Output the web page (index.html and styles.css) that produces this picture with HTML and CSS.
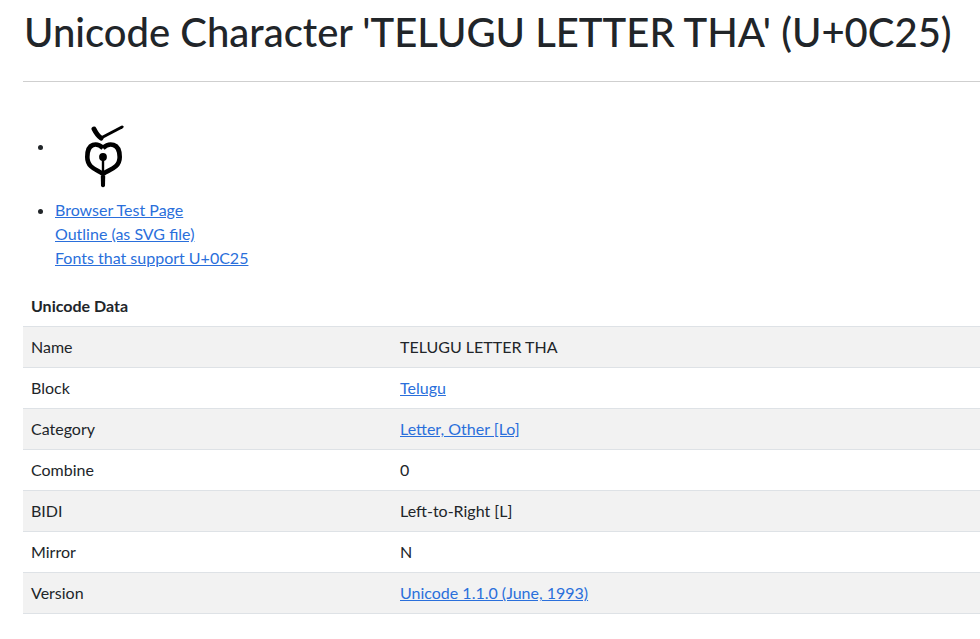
FILE: index.html
```html
<!DOCTYPE html>
<html lang="en">
<head>
<meta charset="utf-8">
<title>Unicode Character 'TELUGU LETTER THA' (U+0C25)</title>
<link rel="stylesheet" href="styles.css">
</head>
<body>
<main class="page">
  <h1 class="title">Unicode Character 'TELUGU LETTER THA' (U+0C25)</h1>
  <hr class="rule">
  <ul class="links">
    <li class="glyph-item">
      <svg class="glyph" width="100" height="100" viewBox="0 0 100 100" aria-label="థ">
        <path d="M48 50 C42 44.5 32.3 44.5 32.3 59 C32.3 71 44 72 48 76 C52 72 64.7 71 64.7 59 C64.7 44.5 54 44.5 48 50" fill="none" stroke="#000" stroke-width="4.6"/>
        <path d="M46 40 L67 29" stroke="#000" stroke-width="3" stroke-linecap="round"/>
        <path d="M39 31 C41 35 43 38 46 40" fill="none" stroke="#000" stroke-width="5" stroke-linecap="round"/>
        <circle cx="48" cy="59" r="3.9" fill="#000"/>
        <path d="M48 61 L48 82" stroke="#000" stroke-width="2.4"/>
        <path d="M45.8 78 L50.2 78 L50 88 Q48 90.5 46 88 Z" fill="#000"/>
      </svg>
    </li>
    <li>
      <a href="#">Browser Test Page</a><br>
      <a href="#">Outline (as SVG file)</a><br>
      <a href="#">Fonts that support U+0C25</a>
    </li>
  </ul>
  <table class="data">
    <thead>
      <tr><th colspan="2">Unicode Data</th></tr>
    </thead>
    <tbody>
      <tr><td class="key">Name</td><td>TELUGU LETTER THA</td></tr>
      <tr><td class="key">Block</td><td><a href="#">Telugu</a></td></tr>
      <tr><td class="key">Category</td><td><a href="#">Letter, Other [Lo]</a></td></tr>
      <tr><td class="key">Combine</td><td>0</td></tr>
      <tr><td class="key">BIDI</td><td>Left-to-Right [L]</td></tr>
      <tr><td class="key">Mirror</td><td>N</td></tr>
      <tr><td class="key">Version</td><td><a href="#">Unicode 1.1.0 (June, 1993)</a></td></tr>
    </tbody>
  </table>
</main>
</body>
</html>
```
FILE: styles.css
```css
html, body {
  margin: 0;
  padding: 0;
  overflow: hidden;
}
body {
  font-family: Lato, "Noto Sans", sans-serif;
  font-size: 16px;
  line-height: 24px;
  color: #212529;
  background: #fff;
}
.page {
  width: 1110px;
  padding: 8px 0 0 23px;
}
.title {
  font-size: 40px;
  font-weight: 500;
  line-height: 48px;
  margin: 0 0 8px 1px;
  white-space: nowrap;
  color: #212529;
}
.rule {
  margin: 25px 0 16px;
  border: 0;
  border-top: 1px solid #cfcfcf;
  height: 0;
}
.links {
  margin: 0 0 16px;
  padding-left: 32px;
}
.glyph-item {
  height: 100px;
}
.glyph {
  display: inline-block;
  vertical-align: middle;
}
a {
  color: #2a6fdb;
  text-decoration: underline;
}
.data {
  width: 100%;
  border-collapse: collapse;
}
.data th {
  text-align: left;
  font-weight: 700;
  padding: 8px;
  border-bottom: 1px solid #dee2e6;
}
.data td {
  padding: 8px;
  border-bottom: 1px solid #dee2e6;
  vertical-align: top;
}
.data td.key {
  width: 353px;
}
.data tbody tr:nth-child(odd) {
  background: #f2f2f2;
}
```
